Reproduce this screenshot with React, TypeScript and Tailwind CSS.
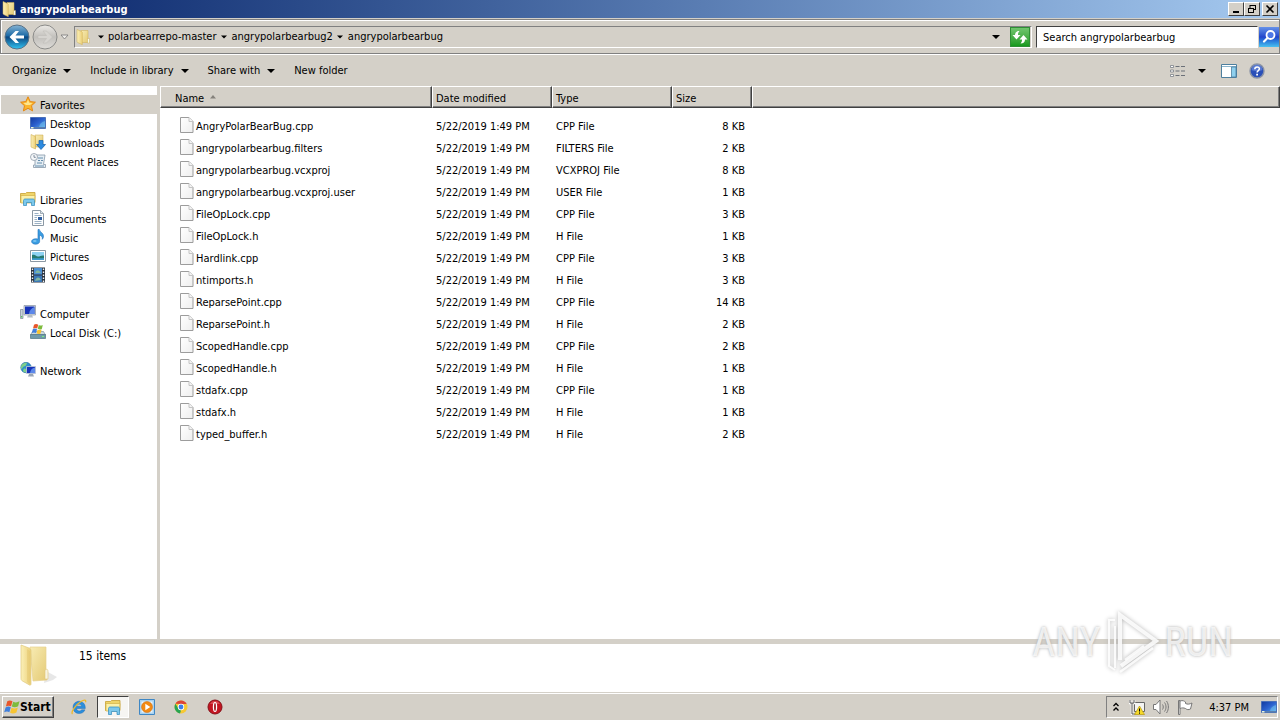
import type { ReactNode } from "react";

type IconProps = { className?: string };

const files = [
  { name: "AngryPolarBearBug.cpp", type: "CPP File", size: "8 KB" },
  { name: "angrypolarbearbug.filters", type: "FILTERS File", size: "2 KB" },
  { name: "angrypolarbearbug.vcxproj", type: "VCXPROJ File", size: "8 KB" },
  { name: "angrypolarbearbug.vcxproj.user", type: "USER File", size: "1 KB" },
  { name: "FileOpLock.cpp", type: "CPP File", size: "3 KB" },
  { name: "FileOpLock.h", type: "H File", size: "1 KB" },
  { name: "Hardlink.cpp", type: "CPP File", size: "3 KB" },
  { name: "ntimports.h", type: "H File", size: "3 KB" },
  { name: "ReparsePoint.cpp", type: "CPP File", size: "14 KB" },
  { name: "ReparsePoint.h", type: "H File", size: "2 KB" },
  { name: "ScopedHandle.cpp", type: "CPP File", size: "2 KB" },
  { name: "ScopedHandle.h", type: "H File", size: "1 KB" },
  { name: "stdafx.cpp", type: "CPP File", size: "1 KB" },
  { name: "stdafx.h", type: "H File", size: "1 KB" },
  { name: "typed_buffer.h", type: "H File", size: "2 KB" },
];

function Gradients() {
  return (
    <svg className="absolute h-0 w-0" aria-hidden="true">
      <defs>
        <linearGradient id="folder" x1="0" x2="1" y1="0" y2="0">
          <stop offset="0" stopColor="#fbf0b8" />
          <stop offset="1" stopColor="#ecd07a" />
        </linearGradient>
        <linearGradient id="folderBack" x1="0" x2="1" y1="0" y2="1">
          <stop offset="0" stopColor="#f8ecb4" />
          <stop offset="1" stopColor="#e4ca74" />
        </linearGradient>
        <linearGradient id="screen" x1="0" x2="1" y1="0" y2="1">
          <stop offset="0" stopColor="#12399e" />
          <stop offset="0.5" stopColor="#2c62cf" />
          <stop offset="1" stopColor="#5cb4ec" />
        </linearGradient>
        <linearGradient id="back" x1="0" x2="0" y1="0" y2="1">
          <stop offset="0" stopColor="#86b4d4" />
          <stop offset="0.45" stopColor="#1c6aa6" />
          <stop offset="0.5" stopColor="#0c4680" />
          <stop offset="1" stopColor="#31c4f2" />
        </linearGradient>
        <linearGradient id="forward" x1="0" x2="0" y1="0" y2="1">
          <stop offset="0" stopColor="#eceae6" />
          <stop offset="0.5" stopColor="#c2c0bc" />
          <stop offset="1" stopColor="#dedcd8" />
        </linearGradient>
        <linearGradient id="page" x1="0" x2="1" y1="0" y2="1">
          <stop offset="0" stopColor="#ffffff" />
          <stop offset="1" stopColor="#eeeeee" />
        </linearGradient>
      </defs>
    </svg>
  );
}

function FolderIcon({ className = "h-4 w-4" }: IconProps) {
  return (
    <svg viewBox="0 0 16 16" className={className} aria-hidden="true">
      <path d="M6 1.500h7v12H6z" fill="url(#folderBack)" stroke="#cfae50" strokeWidth=".5" />
      <path d="M2 .5l4.500 2c.6.3.8.6.8 1.200v12L2.600 13.500C2.100 13.200 2 13 2 12.500z" fill="url(#folder)" stroke="#cfae50" strokeWidth=".5" />
      <path d="M12.500 9.500h2v4.500h-2z" fill="#f5f9ee" stroke="#c9a540" strokeWidth=".4" />
    </svg>
  );
}

function LargeFolderIcon() {
  return (
    <svg viewBox="0 0 40 44" className="h-11 w-10" aria-hidden="true">
      <path d="M26 27l11 6-4 3-9 3z" fill="#b9b9b9" opacity=".35" />
      <path d="M10 3l16 0v26l1 2v5l-14 1z" fill="url(#folderBack)" stroke="#e6d190" strokeWidth=".7" />
      <path d="M1 1l8 3c1.300.6 2 1.300 2 3v33c0 1-.8 1.500-1.500 1L2.500 37c-1-.6-1.500-1.300-1.500-2.500z" fill="url(#folder)" stroke="#e0c87e" strokeWidth=".7" />
      <path d="M7 5l3 2v33l-3-2z" fill="#d9b95c" opacity=".3" />
      <path d="M25 26c2-1.500 3-.5 3 1v8h-3z" fill="#f8f4df" stroke="#e0c87e" strokeWidth=".6" />
    </svg>
  );
}

function LibraryIcon({ className = "h-4 w-4" }: IconProps) {
  return (
    <svg viewBox="0 0 16 16" className={className} aria-hidden="true">
      <path d="M.5 2.500h5l1-1h8.500v10H.5z" fill="#efd468" stroke="#c6a032" strokeWidth=".8" />
      <path d="M1 4.500h14l-.6 7.500H1z" fill="#fbf0a8" stroke="#d3b146" strokeWidth=".7" />
      <path d="M3.500 14.500V9.500c0-1 .8-1.500 1.500-1.500h8c1 0 1.500.8 1.500 1.500v5h-3v-3H6.500v3z" fill="#7cc8ec" stroke="#2f89bd" strokeWidth=".7" />
    </svg>
  );
}

function StarIcon() {
  return (
    <svg viewBox="0 0 16 16" className="h-4 w-4" aria-hidden="true">
      <path d="M8 .8l2.200 4.800 5.200.6-3.900 3.500 1.100 5.200L8 12.300l-4.600 2.600 1.100-5.200L.6 6.200l5.200-.6z" fill="#fbb62f" stroke="#e58712" />
      <path d="M8 3.500l1.300 3.200 3.200.3-2.500 2H6L3.500 7l3.200-.3z" fill="#fff3a6" opacity=".8" />
    </svg>
  );
}

function DesktopIcon() {
  return (
    <svg viewBox="0 0 16 16" className="h-4 w-4" aria-hidden="true">
      <path d="M.5 2.500h15v11H.5z" fill="url(#screen)" stroke="#4a70b8" />
      <path d="M1 12h14v1.500H1z" fill="#5a7fae" />
      <path d="M1 12h2.500v1.500H1z" fill="#e8f3d8" />
      <path d="M9 12c1-4 3-5 6-6v6z" fill="#7cc8f2" opacity=".5" />
    </svg>
  );
}

function DownloadsIcon() {
  return (
    <svg viewBox="0 0 16 16" className="h-4 w-4" aria-hidden="true">
      <path d="M5 1h8v12H5z" fill="url(#folderBack)" stroke="#c9a540" strokeWidth=".5" />
      <path d="M1 .5l4.500 2V15L1 13z" fill="url(#folder)" stroke="#c9a540" strokeWidth=".5" />
      <path d="M9 6.500h4v4h2.500L11 15.500 6.500 10.500H9z" fill="#2d8be0" stroke="#1460ac" strokeWidth=".7" />
    </svg>
  );
}

function RecentIcon() {
  return (
    <svg viewBox="0 0 16 16" className="h-4 w-4" aria-hidden="true">
      <path d="M5 2h10l-1.500 9.500h2v3H3.500v-2.500H5z" fill="#e6eef4" stroke="#8698a8" strokeWidth=".8" />
      <path d="M8 5h5M8 7.500h2M11 7.500h2M7 10h5M5 13h9" stroke="#5681a4" strokeWidth=".9" />
      <circle cx="4" cy="4" r="3.500" fill="#f6f8fa" stroke="#8f9ca8" strokeWidth=".8" />
      <path d="M4 2v2.300h1.800" fill="none" stroke="#4e6276" strokeWidth=".7" />
    </svg>
  );
}

function DocumentIcon() {
  return (
    <svg viewBox="0 0 16 16" className="h-4 w-4" aria-hidden="true">
      <path d="M2.500.5h8l3 3v12h-11z" fill="#fdfefe" stroke="#7e8c9a" strokeWidth=".9" />
      <path d="M10.500.5v3h3" fill="#dce5ec" stroke="#7e8c9a" strokeWidth=".7" />
      <path d="M4.500 3.500h4M4.500 5.500h7M4.500 7.500h2.500M4.500 9.500h2.500M4.500 11.500h7M4.500 13.500h7" stroke="#829db6" strokeWidth=".8" />
      <path d="M8 7h4v3H8z" fill="#2f5ea0" />
    </svg>
  );
}

function MusicIcon() {
  return (
    <svg viewBox="0 0 16 16" className="h-4 w-4" aria-hidden="true">
      <path d="M8 .5h1.300c.3 2.500 4.500 3.500 4.200 7-.1 1.200-.5 2-1.200 2.800.3-2.500-.8-3.500-2.700-4.300V12.500c0 1.500-1.700 2.700-4 2.700S1.600 14 1.600 12.500s1.700-2.700 4-2.700c1 0 1.800.1 2.400.4z" fill="#3b9ee2" stroke="#1b6cb8" strokeWidth=".6" />
      <ellipse cx="4.800" cy="12" rx="1.800" ry="1" fill="#78c2f0" />
    </svg>
  );
}

function PicturesIcon() {
  return (
    <svg viewBox="0 0 16 16" className="h-4 w-4" aria-hidden="true">
      <path d="M.5 2.500h15v11H.5z" fill="#fff" stroke="#7f8c98" strokeWidth=".9" />
      <path d="M2 4h12v8H2z" fill="#8fd2f2" />
      <path d="M2 7c3-.8 4 1.500 6 1.500S11 7 14 7.500V12H2z" fill="#277a70" />
      <path d="M2 10.500c4-1 8 .5 12-.5v2H2z" fill="#3e9bd0" />
    </svg>
  );
}

function VideosIcon() {
  return (
    <svg viewBox="0 0 16 16" className="h-4 w-4" aria-hidden="true">
      <path d="M1 .5h14v15H1z" fill="#2a323c" />
      <path d="M4 1h8v6.500H4z" fill="#4b8fd2" />
      <path d="M4 8.500h8V15H4z" fill="#3a77b6" />
      <path d="M5 6c2-4 4-3 6 0zM5 14c1-4 4-5 6-1z" fill="#7fb5a0" />
      <path d="M2.500 1.500v14M13.500 1.500v14" stroke="#eef2f6" strokeWidth="1.400" strokeDasharray="1.500 1.500" />
    </svg>
  );
}

function ComputerIcon() {
  return (
    <svg viewBox="0 0 16 16" className="h-4 w-4" aria-hidden="true">
      <path d="M.5 4.500h2.500v9H.5z" fill="#c8d2da" stroke="#7c8a96" strokeWidth=".7" />
      <path d="M4 .5h11.500V10H4z" fill="#d8dde2" stroke="#8692a0" strokeWidth=".7" />
      <path d="M5 1.500h9.500V9H5z" fill="#1733b8" />
      <path d="M9 9c.5-4 2.500-6 5.500-7v7z" fill="#5c88ea" />
      <path d="M8 10h4l1 2.500H7z" fill="#b4bcc4" />
      <path d="M1.200 11h1v1.500h-1z" fill="#3fbf3f" />
    </svg>
  );
}

function FlagMark({ className = "" }: IconProps) {
  return (
    <svg viewBox="0 0 17 16" className={className} aria-hidden="true">
      <path d="M3.500 2C5.500.7 7.300 1 9 2L7.500 7.300C5.700 6.300 4 6.300 2 7.500z" fill="#e8562a" />
      <path d="M9.800 2.500C11.800 3.500 14 3.500 16.500 2L15 7.300C12.500 8.800 10.200 8.600 8.300 7.600z" fill="#7dbb3c" />
      <path d="M1.700 8.500c2-1.200 3.700-1.200 5.500-.2L5.700 13.500C4 12.500 2.200 12.500.2 13.700z" fill="#3f7fdc" />
      <path d="M8 8.800c1.900 1 4.200 1.200 6.700-.3l-1.500 5.300c-2.500 1.500-4.800 1.300-6.700.3z" fill="#f7c432" />
    </svg>
  );
}

function DiskIcon() {
  return (
    <svg viewBox="0 0 16 16" className="h-4 w-4" aria-hidden="true">
      <path d="M2.500 7.500h11l2 3.500H.5z" fill="#cbd9df" stroke="#728894" strokeWidth=".6" />
      <path d="M.5 10.500h15v4H.5z" fill="#6f9aaa" stroke="#4e7482" strokeWidth=".7" />
      <path d="M12 12.500h2" stroke="#7bf07b" />
      <path d="M4 .7c1.500-1 2.800-.8 4.200 0L7.200 4.500c-1.400-.8-2.700-.8-4.200 0z" fill="#e8562a" />
      <path d="M8.800 1c1.300.8 2.700.8 4 0l-1 3.900c-1.400.8-2.700.6-4-.2z" fill="#7dbb3c" />
      <path d="M2.800 5.200c1.500-1 2.800-.8 4.200 0L6 9c-1.400-.8-2.700-.8-4.200 0z" fill="#3f7fdc" />
      <path d="M7.600 5.500c1.300.8 2.700.8 4 0l-1 3.900c-1.400.8-2.700.6-4-.2z" fill="#f7c432" />
    </svg>
  );
}

function NetworkIcon() {
  return (
    <svg viewBox="0 0 16 16" className="h-4 w-4" aria-hidden="true">
      <circle cx="6" cy="5.500" r="5.200" fill="#2d8fcc" stroke="#18629a" strokeWidth=".6" />
      <path d="M2 2.500c2-2 4-2 5-1.500L6 3.500 3 5 1.500 7.500C.5 5.500 1 3.500 2 2.500zM4 6.500l3 .5-1 3.500c-2 0-3-1-3-2z" fill="#7fd08a" />
      <path d="M6.500 4.500h9v7h-9z" fill="#1733b8" stroke="#c3cbd6" strokeWidth=".8" />
      <path d="M10 11c.5-3 2-5 5-5.500V11z" fill="#5c88ea" />
      <path d="M9 12h4l1 2.500H8z" fill="#9aa6b6" />
    </svg>
  );
}

function PageIcon() {
  return (
    <svg viewBox="0 0 14 16" className="h-4 w-3.5 shrink-0" aria-hidden="true">
      <path d="M.5.5h8.500l4 4v11H.5z" fill="url(#page)" stroke="#9c9c9c" />
      <path d="M9 .5v4h4" fill="#f4f4f4" stroke="#c4c4c4" />
    </svg>
  );
}

function Caret({ className = "w-2" }: IconProps) {
  return (
    <svg viewBox="0 0 8 4" className={`h-1 shrink-0 ${className}`} aria-hidden="true">
      <path d="M0 0h8L4 4z" fill="#000" />
    </svg>
  );
}

function BackButton() {
  return (
    <button type="button" aria-label="Back" className="h-[26px] w-[26px]">
      <svg viewBox="0 0 26 26" aria-hidden="true">
        <circle cx="13" cy="13" r="12" fill="url(#back)" stroke="#5a7286" />
        <path d="M5.500 13l6-6h3.500L11.500 11.500H20v3h-8.500l3.500 4.500h-3.500z" fill="#fff" />
      </svg>
    </button>
  );
}

function ForwardButton() {
  return (
    <button type="button" aria-label="Forward" className="h-[26px] w-[26px]">
      <svg viewBox="0 0 26 26" aria-hidden="true">
        <circle cx="13" cy="13" r="12" fill="url(#forward)" stroke="#8b8b89" />
        <path d="M20.500 13l-6-6H11l3.500 4.500H6v3h8.500L11 19h3.500z" fill="#d6d4d0" stroke="#bfbdb9" strokeWidth=".6" />
      </svg>
    </button>
  );
}

function WindowButton({ label, children }: { label: string; children: ReactNode }) {
  return (
    <button
      type="button"
      aria-label={label}
      className="flex h-3.5 w-4 items-center justify-center border border-t-white border-r-[#404040] border-b-[#404040] border-l-white bg-[#d4d0c8]"
    >
      <svg viewBox="0 0 12 10" className="h-2.5 w-3" aria-hidden="true">
        {children}
      </svg>
    </button>
  );
}

function TitleBar() {
  return (
    <header className="flex h-[18px] shrink-0 items-center bg-linear-to-r from-[#0a246a] to-[#a6caf0] pr-0.5 pl-px">
      <FolderIcon />
      <h1 className="ml-[3px] flex-1 pt-px text-[11px] font-bold text-white">angrypolarbearbug</h1>
      <WindowButton label="Minimize">
        <path d="M3 7h6v2H3z" />
      </WindowButton>
      <WindowButton label="Restore">
        <path d="M4 1.500h6M4 1v3M9.500 1v5M8 5.500h2M2 4.500h6M2.500 4v5M7.500 4v5M2 8.500h6" stroke="#000" fill="none" />
      </WindowButton>
      <div className="w-0.5" />
      <WindowButton label="Close">
        <path d="M2.500 1.500l7 7M9.500 1.500l-7 7" stroke="#000" strokeWidth="1.600" />
      </WindowButton>
    </header>
  );
}

function AddressBar() {
  const crumbs = ["polarbearrepo-master", "angrypolarbearbug2", "angrypolarbearbug"];
  return (
    <div className="mt-px flex h-[35px] shrink-0 items-center border border-[#808080] pt-px pl-[3px] shadow-[inset_1px_1px_0_#fff,0_1px_0_#fff]">
      <BackButton />
      <div className="w-0.5" />
      <ForwardButton />
      <button type="button" aria-label="Recent locations" className="ml-0.5 w-3">
        <svg viewBox="0 0 9 6" className="h-1.5 w-[9px]" aria-hidden="true">
          <path d="M1 1h7L4.500 5z" fill="#f1efeb" stroke="#777" strokeWidth=".8" />
        </svg>
      </button>
      <nav
        aria-label="Address"
        className="ml-0.5 flex h-[22px] flex-1 items-center border border-t-[#808080] border-r-white border-b-white border-l-[#808080]"
      >
        <FolderIcon />
        <div className="w-0.5" />
        {crumbs.map((crumb) => (
          <div key={crumb} className="flex items-center">
            <div className="flex w-[15px] justify-center">
              <Caret className="w-1.5" />
            </div>
            <a href="#" className="whitespace-nowrap">{crumb}</a>
          </div>
        ))}
        <button type="button" aria-label="Previous locations" className="mr-2.5 ml-auto">
          <Caret />
        </button>
        <button type="button" aria-label="Refresh" className="mr-px h-5 w-5 border border-[#2f8f35] bg-linear-to-b from-[#70c56e] to-[#129a1c]">
          <svg viewBox="0 0 18 18" aria-hidden="true">
            <path d="M8.500 3C5.500 3 4 4.500 4 7H1.500l4 4.500L9.500 7H7c0-1.600.3-2.800 1.500-4z" fill="#fff" />
            <path d="M9.500 15.500c3 0 4.500-1.500 4.500-4h2.500l-4-4.500-4 4.500H11c0 1.600-.3 2.800-1.500 4z" fill="#fff" />
          </svg>
        </button>
      </nav>
      <div className="ml-1 flex h-[22px] w-[222px] border border-t-[#404040] border-r-white border-b-white border-l-[#404040] bg-white">
        <input
          type="text"
          aria-label="Search"
          placeholder="Search angrypolarbearbug"
          className="min-w-0 flex-1 px-1.5 pt-px outline-none placeholder:text-black"
        />
      </div>
      <button type="button" aria-label="Start search" className="ml-px h-5 w-5 bg-linear-to-b from-[#6791e8] via-[#2445cc] to-[#4bc0ef]">
        <svg viewBox="0 0 20 20" aria-hidden="true">
          <circle cx="11.500" cy="8" r="4" fill="#4d78e6" stroke="#fff" strokeWidth="1.800" />
          <path d="M8.500 11L5 14.500" stroke="#fff" strokeWidth="2.200" strokeLinecap="round" />
        </svg>
      </button>
    </div>
  );
}

function Toolbar() {
  return (
    <div className="mt-px flex h-[31px] shrink-0 items-center gap-[19px] pl-3">
      {["Organize", "Include in library", "Share with"].map((label) => (
        <button key={label} type="button" className="flex items-center gap-[7px] whitespace-nowrap">
          {label}
          <Caret />
        </button>
      ))}
      <button type="button" className="whitespace-nowrap">New folder</button>
      <div className="mr-[15px] ml-auto flex items-center">
        <button type="button" aria-label="Change your view">
          <svg viewBox="0 0 16 14" className="h-3.5 w-4" aria-hidden="true">
            <path d="M.5 1.500h3v2h-3zM.5 6h3v2h-3zM.5 10.500h3v2h-3z" fill="#fff" stroke="#7a7f86" strokeWidth=".8" />
            <path d="M5.500 2.500h4M11 2.500h4M5.500 7h4M11 7h4M5.500 11.500h4M11 11.500h4" stroke="#6b7078" />
          </svg>
        </button>
        <button type="button" aria-label="More options" className="ml-3">
          <Caret />
        </button>
        <button type="button" aria-label="Show the preview pane" className="ml-[15px]">
          <svg viewBox="0 0 16 14" className="h-3.5 w-4" aria-hidden="true">
            <path d="M.5.5h15v13H.5z" fill="#fff" stroke="#4d7f9e" />
            <path d="M1 2.500h14" stroke="#8ab4cc" />
            <path d="M10.500 3h4.500v10h-4.500z" fill="#8fd0ee" stroke="#4d7f9e" strokeWidth=".8" />
          </svg>
        </button>
        <button type="button" aria-label="Get help" className="ml-3">
          <svg viewBox="0 0 16 16" className="h-4 w-4" aria-hidden="true">
            <circle cx="8" cy="8" r="7" fill="#2a4fb8" stroke="#8a93a6" strokeWidth="1.400" />
            <path d="M2.500 7a5.500 5.500 0 0 1 11 0c-3 1.500-8 1.500-11 0z" fill="#88a4e8" opacity=".5" />
            <path d="M5.800 6.200c0-3 4.600-3 4.600-.4 0 1.800-2.300 1.700-2.300 3.700" fill="none" stroke="#fff" strokeWidth="1.500" />
            <path d="M7.200 10.800h1.800v1.800H7.200z" fill="#fff" />
          </svg>
        </button>
      </div>
    </div>
  );
}

const places = [
  {
    label: "Favorites",
    icon: <StarIcon />,
    items: [
      { label: "Desktop", icon: <DesktopIcon /> },
      { label: "Downloads", icon: <DownloadsIcon /> },
      { label: "Recent Places", icon: <RecentIcon /> },
    ],
  },
  {
    label: "Libraries",
    icon: <LibraryIcon />,
    items: [
      { label: "Documents", icon: <DocumentIcon /> },
      { label: "Music", icon: <MusicIcon /> },
      { label: "Pictures", icon: <PicturesIcon /> },
      { label: "Videos", icon: <VideosIcon /> },
    ],
  },
  {
    label: "Computer",
    icon: <ComputerIcon />,
    items: [{ label: "Local Disk (C:)", icon: <DiskIcon /> }],
  },
  { label: "Network", icon: <NetworkIcon />, items: [] },
];

function NavigationPane() {
  return (
    <nav aria-label="Places" className="flex w-[157px] shrink-0 flex-col gap-[19px] bg-white pt-[9px] pl-px">
      {places.map((group) => (
        <div key={group.label}>
          <a
            href="#"
            className={`flex h-[19px] items-start gap-1 pt-px pl-[19px] ${group.label === "Favorites" ? "bg-[#d4d0c8]" : ""}`}
          >
            {group.icon}
            <span className="pt-[3px]">{group.label}</span>
          </a>
          {group.items.map((item) => (
            <a key={item.label} href="#" className="flex h-[19px] items-start gap-1 pt-px pl-[29px]">
              {item.icon}
              <span className="pt-[3px]">{item.label}</span>
            </a>
          ))}
        </div>
      ))}
    </nav>
  );
}

const headCell =
  "h-[22px] border border-t-white border-r-[#404040] border-b-[#404040] border-l-white bg-[#d4d0c8] p-0 pt-[3px] pl-[3px] text-left font-normal shadow-[inset_-1px_-1px_0_#808080]";

function FileList() {
  return (
    <main className="min-w-0 flex-1 overflow-hidden bg-white">
      <table className="w-full table-fixed border-separate border-spacing-0">
        <colgroup>
          <col className="w-[272px]" />
          <col className="w-[120px]" />
          <col className="w-[120px]" />
          <col className="w-20" />
          <col />
        </colgroup>
        <thead>
          <tr>
            <th className={headCell}>
              <div className="flex items-center gap-1.5 pl-[11px]">
                Name
                <svg viewBox="0 0 6 4" className="mb-1 h-1 w-1.5" aria-hidden="true">
                  <path d="M3 0l3 3.500H0z" fill="#85827c" />
                </svg>
              </div>
            </th>
            <th className={headCell}>Date modified</th>
            <th className={headCell}>Type</th>
            <th className={headCell}>Size</th>
            <td className={headCell} />
          </tr>
        </thead>
        <tbody className="before:block before:h-[7px] before:content-['']">
          {files.map((file) => (
            <tr key={file.name} className="h-[22px] align-top">
              <td className="p-0 pt-0.5 pl-5">
                <div className="flex items-start gap-0.5">
                  <PageIcon />
                  <span className="pt-[3px]">{file.name}</span>
                </div>
              </td>
              <td className="p-0 pt-[5px] pl-1">5/22/2019 1:49 PM</td>
              <td className="p-0 pt-[5px] pl-1">{file.type}</td>
              <td className="p-0 pt-[5px] pr-[7px] text-right">{file.size}</td>
              <td className="p-0" />
            </tr>
          ))}
        </tbody>
      </table>
    </main>
  );
}

function Watermark() {
  return (
    <div className="pointer-events-none absolute right-[47px] bottom-11 flex items-center font-['Roboto_Condensed','Liberation_Sans_Narrow','Open_Sans_Condensed',sans-serif] text-[40px] leading-none text-white/75 [text-shadow:0_0_3px_#aaa]">
      <span>ANY</span>
      <svg viewBox="0 0 54 66" className="mr-1.5 ml-1 h-[66px] w-[54px] drop-shadow-[0_0_2px_#aaa]" fill="none" stroke="#fff" strokeOpacity=".85" aria-hidden="true">
        <path d="M10 10H4v46l6 4M10 16v42" strokeWidth="2" />
        <path d="M15 50V5l36 26-35 25" strokeWidth="4" />
        <path d="M20 50l19-14M15 62l33-24" strokeWidth="2.500" />
      </svg>
      <span>RUN</span>
    </div>
  );
}

function TaskButton({ label, active = false, children }: { label: string; active?: boolean; children: ReactNode }) {
  return (
    <button
      type="button"
      aria-label={label}
      className={`flex h-[22px] w-8 items-center justify-center ${active ? "border border-t-[#404040] border-r-white border-b-white border-l-[#404040] bg-[#f6f5f2]" : ""}`}
    >
      <svg viewBox="0 0 16 16" className="h-4 w-4" aria-hidden="true">
        {children}
      </svg>
    </button>
  );
}

function Taskbar() {
  return (
    <footer className="flex h-7 shrink-0 items-center border-t border-[#d4d0c8] px-0.5 shadow-[inset_0_1px_0_#fff]">
      <button
        type="button"
        className="flex h-[22px] w-[52px] items-center border border-t-white border-r-[#404040] border-b-[#404040] border-l-white pl-px text-[12px] font-bold shadow-[inset_-1px_-1px_0_#808080]"
      >
        <FlagMark className="h-4 w-4 shrink-0" />
        Start
      </button>
      <div className="ml-[9px] flex gap-[2px]">
        <TaskButton label="Internet Explorer">
          <path d="M14.300 9.500H5.500c.3 2.700 3.800 3.300 5 1.300h3.500c-1.700 5.500-12 5-12-2.300 0-8.500 12.800-8.500 12.300 1zM5.600 7.200h5c-.3-2.500-4.500-2.600-5 0z" fill="#2b8edb" stroke="#1463b0" strokeWidth=".4" />
          <path d="M1.500 15C-.5 13 5 5.500 10 2.500c3-2 5.500-2 4.500.8" fill="none" stroke="#f0b92a" strokeWidth="1.300" />
        </TaskButton>
        <TaskButton label="Windows Explorer" active>
          <path d="M.5 2.500h5l1-1h8.500v10H.5z" fill="#efd468" stroke="#c6a032" strokeWidth=".8" />
          <path d="M1 4.500h14l-.6 7.500H1z" fill="#fbf0a8" stroke="#d3b146" strokeWidth=".7" />
          <path d="M3.500 15.500V9.500c0-1 .8-1.500 1.500-1.500h8c1 0 1.500.8 1.500 1.500v6h-2.500v-3H6.500v3z" fill="#7cc8ec" stroke="#2f89bd" strokeWidth=".7" />
        </TaskButton>
        <TaskButton label="Media Player">
          <path d="M.5.5h15v15H.5z" fill="#a8d2f0" stroke="#3f87c4" />
          <path d="M2.500 2.500h11v11h-11z" fill="#e8f4fc" />
          <circle cx="8" cy="8" r="5.500" fill="#f28a14" stroke="#c8640a" strokeWidth=".5" />
          <path d="M6.300 4.800l5 3.200-5 3.200z" fill="#fff" />
        </TaskButton>
        <TaskButton label="Chrome">
          <circle cx="8" cy="8" r="6.500" fill="#f6c833" />
          <path d="M2.400 4.800A6.500 6.500 0 0 1 13.700 5H8z" fill="#dc4437" />
          <path d="M2.400 4.800L6 10.500l2 1-1 3A6.500 6.500 0 0 1 2.400 4.800z" fill="#28a452" />
          <circle cx="8" cy="8" r="3.200" fill="#fff" />
          <circle cx="8" cy="8" r="2.400" fill="#3c7eea" />
        </TaskButton>
        <TaskButton label="Opera">
          <circle cx="8" cy="8" r="7" fill="#c41420" stroke="#851018" />
          <path d="M3 5c2-4 8-4 10 0z" fill="#ef7c80" opacity=".5" />
          <ellipse cx="8" cy="8" rx="2.200" ry="5" fill="#fff" />
          <ellipse cx="8" cy="8" rx=".9" ry="4" fill="#9c121a" />
        </TaskButton>
      </div>
      <div className="ml-auto flex h-[22px] items-center border border-t-[#808080] border-r-white border-b-white border-l-[#808080] pl-1.5">
        <button type="button" aria-label="Show hidden icons">
          <svg viewBox="0 0 6 10" className="h-2.5 w-1.5" fill="none" stroke="#000" strokeWidth="1.300" aria-hidden="true">
            <path d="M.5 4L3 1.500 5.500 4M.5 8.500L3 6l2.500 2.500" />
          </svg>
        </button>
        <svg viewBox="0 0 16 16" className="ml-2.5 h-4 w-4" aria-hidden="true">
          <path d="M5.500 3.500h10v9h-10z" fill="#f4f4f2" stroke="#666" />
          <path d="M1 1v3h4V1M3 4v11h4" fill="none" stroke="#fff" strokeWidth="2.500" />
          <path d="M1 1v3h4V1M3 4v11h4" fill="none" stroke="#555" />
          <path d="M10.500 7l5 8.500h-10z" fill="#f5d92a" stroke="#b79a10" strokeWidth=".7" />
          <path d="M10.500 9.500v3M10.500 13.500v1.200" stroke="#000" />
        </svg>
        <svg viewBox="0 0 16 16" className="ml-2 h-4 w-4" fill="none" stroke="#777" aria-hidden="true">
          <path d="M.5 5.500h2.500l4-4.500v14l-4-4.500H.5z" fill="#fff" />
          <path d="M9.500 5.500c1 1.500 1 3.500 0 5M11.500 3.500c2 2.500 2 6.500 0 9M13.500 2c2.500 3.500 2.500 8.500 0 12" />
        </svg>
        <svg viewBox="0 0 16 16" className="ml-2 h-4 w-4" fill="#fff" stroke="#777" aria-hidden="true">
          <path d="M1.500 1.500h1.500v14H1.500z" />
          <path d="M3 2c3-1 4 0 5.500 1l0 1.500c2 1 4 .8 6.500-.5l-1.500 6c-2 1-3.500.8-5-.5-2-.8-3.500-.8-5.500 0z" />
        </svg>
        <time className="ml-4 pt-0.5 whitespace-nowrap">4:37 PM</time>
        <button type="button" aria-label="Show desktop" className="ml-3">
          <DesktopIcon />
        </button>
      </div>
    </footer>
  );
}

export default function App() {
  return (
    <div className="relative flex h-screen flex-col overflow-hidden bg-[#d4d0c8] font-['DejaVu_Sans_Condensed','DejaVu_Sans',sans-serif] text-[11px] leading-[14px] text-black">
      <Gradients />
      <TitleBar />
      <AddressBar />
      <Toolbar />
      <div className="flex min-h-0 flex-1 gap-[3px]">
        <NavigationPane />
        <FileList />
      </div>
      <section aria-label="Details" className="mt-[5px] flex h-12 shrink-0 bg-white pl-5">
        <LargeFolderIcon />
        <p className="mt-[5px] ml-[19px] text-[12px]">15 items</p>
      </section>
      <Taskbar />
      <Watermark />
    </div>
  );
}
